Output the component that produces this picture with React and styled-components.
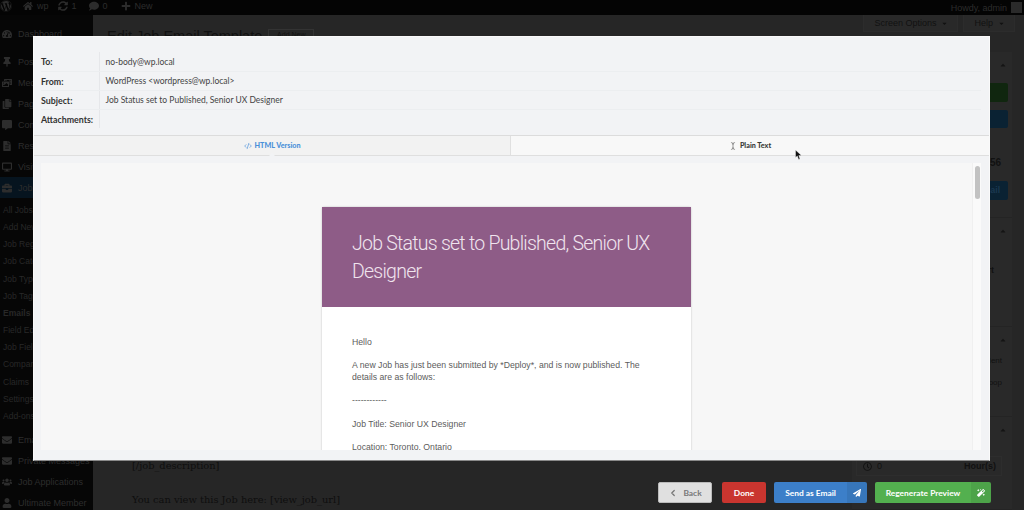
import React from "react"
import styled, { createGlobalStyle } from "styled-components"
import { CodeXml, TextCursor, ChevronLeft } from "lucide-react"
import {
  FaWordpress, FaHome, FaSyncAlt, FaComment, FaPlus, FaTachometerAlt, FaThumbtack, FaPhotoVideo,
  FaCopy, FaCommentAlt, FaFileAlt, FaDesktop, FaBriefcase, FaEnvelope, FaUsers, FaUser,
  FaPaperPlane, FaMagic, FaRegClock, FaCaretUp, FaCaretDown,
} from "react-icons/fa"

const Global = createGlobalStyle`
  html, body { margin: 0; padding: 0; background: #262626; }
  * { box-sizing: border-box; }
`

const Page = styled.div`
  position: relative;
  width: 1024px;
  height: 510px;
  overflow: hidden;
  display: flex;
  flex-direction: column;
  background: #262626;
  font-family: "Liberation Sans", Arial, sans-serif;
`

const AdminBar = styled.div`
  display: flex;
  align-items: center;
  flex: 0 0 15px;
  padding: 0 2px 3px 0;
  background: #040404;
  color: #2c2c2c;
  font-size: 9px;
  svg { width: 10px; height: 10px; }
`

const BarItem = styled.span`
  display: flex;
  align-items: center;
  gap: 4px;
  margin-left: ${p => p.$left || 0}px;
`

const Logo = styled(FaWordpress)`
  && { width: 12px; height: 12px; }
`

const Howdy = styled.span`
  display: flex;
  align-items: center;
  gap: 4px;
  margin-left: auto;
  margin-bottom: -3px;
`

const Avatar = styled.i`
  width: 11px;
  height: 11px;
  background: #2a2a2a;
`

const Body = styled.div`
  display: flex;
  flex: 1;
  min-height: 0;
`

const Sidebar = styled.nav`
  flex: 0 0 93px;
  padding-top: 8px;
  background: #060606;
  overflow: hidden;
`

const MenuItem = styled.div`
  display: flex;
  align-items: center;
  gap: 6px;
  height: 21px;
  padding-left: 2px;
  margin-bottom: ${p => p.$after || 0}px;
  color: #2d2d2d;
  font-size: 9px;
  white-space: nowrap;
  background: ${p => (p.$active ? "#06141f" : "transparent")};
  svg { width: 10px; height: 10px; flex: none; }
`

const SubMenu = styled.div`
  padding: 4px 0 4.5px;
`

const SubItem = styled.div`
  height: 17.17px;
  line-height: 17px;
  padding-left: 3px;
  font-size: 8.5px;
  font-weight: ${p => (p.$bold ? 700 : 400)};
  color: #282828;
  white-space: nowrap;
`

const Main = styled.main`
  flex: 1;
  min-width: 0;
  display: flex;
  flex-direction: column;
  padding-left: 14px;
`

const ScreenTools = styled.div`
  display: flex;
  justify-content: flex-end;
  gap: 5px;
  height: 15px;
  padding-right: 9px;
`

const ScreenTab = styled.div`
  display: flex;
  align-items: center;
  gap: 5px;
  height: 17px;
  padding: 0 9px 0 10px;
  background: #292929;
  border: 1px solid #2c2c2c;
  border-top: 0;
  color: #111;
  font-size: 9px;
  svg { width: 7px; height: 7px; }
`

const TitleRow = styled.div`
  display: flex;
  align-items: flex-start;
  gap: 6px;
  height: 22px;
  color: #111;
  font-size: 14.5px;
  line-height: 13px;
`

const AddNew = styled.span`
  width: 46px;
  height: 12px;
  line-height: 10px;
  margin-top: -1px;
  text-align: center;
  border: 1px solid #333;
  font-size: 7px;
`

const Columns = styled.div`
  display: flex;
  flex: 1;
  min-height: 0;
`

const Editor = styled.div`
  flex: 1;
  display: flex;
  flex-direction: column;
  justify-content: flex-end;
  padding-left: 25px;
  color: #0e0e0e;
  font-family: "DejaVu Serif", "Liberation Serif", serif;
  font-size: 9.85px;
`

const EditorLine = styled.div`
  height: 34px;
  line-height: 20px;
  &:last-child { height: 20px; }
`

const Side = styled.aside`
  flex: 0 0 178px;
  padding: 0 12px 0 6px;
`

const PostBox = styled.section`
  height: ${p => p.$height}px;
  background: #292929;
  border-bottom: 1px solid #242424;
  padding: 0 4px;
  color: #111;
  font-size: 9px;
`

const BoxHead = styled.div`
  display: flex;
  justify-content: flex-end;
  align-items: center;
  height: 26px;
  padding-right: 1px;
  color: #141414;
  svg { width: 8px; height: 8px; }
`

const MetaButton = styled.div`
  height: ${p => p.$h}px;
  margin-top: ${p => p.$top}px;
  padding-right: 8px;
  border-radius: 2px;
  background: ${p => p.$color};
  color: #1a3850;
  font-size: 8.5px;
  font-weight: 700;
  text-align: right;
  line-height: ${p => p.$h}px;
`

const MetaText = styled.div`
  display: flex;
  justify-content: flex-end;
  height: 12px;
  line-height: 12px;
  padding-right: ${p => p.$right || 7}px;
  margin-top: ${p => p.$top}px;
  font-weight: ${p => (p.$bold ? 700 : 400)};
  font-size: ${p => p.$size || 9}px;
`

const HourRow = styled.div`
  display: flex;
  align-items: center;
  gap: 5px;
  margin: 13px 6px 0 0;
  height: 20px;
  padding-left: 6px;
  border: 1px solid #2d2d2d;
  svg { width: 9px; height: 9px; }
  b { margin-left: auto; padding-right: 5px; font-size: 9px; }
`

const Modal = styled.div`
  position: absolute;
  left: 33px;
  top: 36px;
  width: 957px;
  height: 425px;
  display: flex;
  flex-direction: column;
  background: #f2f3f5;
  border: 1px solid #fafafa;
  border-bottom: 1px solid #8a8a8a;
  font-family: Lato, "Liberation Sans", sans-serif;
  overflow: hidden;
`

const Headers = styled.div`
  height: 98px;
  padding: 15px 8px 0 7px;
`

const HeaderRow = styled.div`
  display: flex;
  height: 19px;
  font-size: 8.5px;
  color: #444;
  & + & { border-top: 1.5px solid #eceef0; }
`

const HeaderLabel = styled.div`
  flex: 0 0 59px;
  display: flex;
  align-items: center;
  font-size: 8.8px;
  font-weight: 700;
  color: #333;
  border-right: 1px solid #e6e7ea;
`

const HeaderValue = styled.div`
  display: flex;
  align-items: center;
  padding-left: 5.5px;
`

const Tabs = styled.div`
  display: flex;
  height: 21px;
  border-top: 1px solid #dcdcdc;
  border-bottom: 1px solid #dfdfdf;
`

const Tab = styled.div`
  position: relative;
  flex: 0 0 ${p => p.$width}px;
  display: flex;
  align-items: center;
  justify-content: center;
  gap: 3px;
  font-size: 7.2px;
  font-weight: 900;
  color: ${p => (p.$active ? "#4a90d9" : "#3a3a3a")};
  background: ${p => (p.$active ? "#f2f2f2" : "#f8f8f8")};
  border-right: ${p => (p.$active ? "1px solid #e0e0e0" : "0")};
  svg { width: 8px; height: 8px; }
  ${p => p.$active && `
    &::after {
      content: "";
      position: absolute;
      left: 50%;
      bottom: -1px;
      margin-left: -3px;
      border: 3px solid transparent;
      border-bottom-color: #f2f3f5;
    }
  `}
`

const PreviewWrap = styled.div`
  flex: 1;
  min-height: 0;
  display: flex;
  margin: 7px 8px 10px 7px;
  background: #f7f7f7;
  overflow: hidden;
`

const Preview = styled.div`
  flex: 1;
  padding: 44px 0 0 281px;
  overflow: hidden;
`

const Scroll = styled.div`
  flex: 0 0 9px;
  padding: 3px 1.5px 0 1.5px;
  background: #fafafa;
  border-left: 1px solid #f0f0f0;
`

const Thumb = styled.div`
  width: 5px;
  height: 33px;
  border-radius: 3px;
  background: #c2c2c2;
`

const Card = styled.article`
  width: 369px;
  background: #fff;
  border-radius: 2px 2px 0 0;
  box-shadow: 0 0 2px rgba(0, 0, 0, 0.25);
`

const CardHead = styled.h1`
  margin: 0;
  height: 100px;
  padding: 23px 30px 0;
  background: #8e5c87;
  color: #f0e4ee;
  font-family: Roboto, "Liberation Sans", sans-serif;
  font-weight: 300;
  font-size: 19.5px;
  letter-spacing: -0.75px;
  line-height: 28px;
`

const CardBody = styled.div`
  padding: 29px 30px 0;
  color: #5c5c5c;
  font-family: "Liberation Sans", Arial, sans-serif;
  font-size: 8.7px;
  line-height: 12px;
`

const Para = styled.p`
  margin: 0 0 11.2px;
`

const Actions = styled.div`
  position: absolute;
  right: 33px;
  top: 482px;
  display: flex;
  gap: 8px;
  font-family: Lato, "Liberation Sans", sans-serif;
`

const Button = styled.div`
  display: flex;
  align-items: stretch;
  height: 21px;
  width: ${p => p.$width}px;
  margin-right: ${p => p.$after || 0}px;
  border-radius: 2px;
  overflow: hidden;
  color: ${p => p.$ink || "#fff"};
  background: ${p => p.$color};
  border: ${p => (p.$ink ? "1px solid #bbb" : "0")};
  font-size: 8.4px;
  font-weight: 700;
`

const ButtonLabel = styled.span`
  flex: 1;
  display: flex;
  align-items: center;
  justify-content: center;
  gap: 5px;
  svg { width: 10px; height: 10px; }
`

const ButtonIcon = styled.span`
  flex: 0 0 20px;
  display: flex;
  align-items: center;
  justify-content: center;
  background: rgba(0, 0, 0, 0.07);
  svg { width: 8px; height: 8px; }
`

const Cursor = styled.svg`
  position: absolute;
  left: 795px;
  top: 150px;
  width: 7px;
  height: 10px;
`

const menuTop = [
  { icon: <FaThumbtack />, label: "Posts" },
  { icon: <FaPhotoVideo />, label: "Media" },
  { icon: <FaCopy />, label: "Pages" },
  { icon: <FaCommentAlt />, label: "Comments" },
  { icon: <FaFileAlt />, label: "Resources" },
  { icon: <FaDesktop />, label: "Visitors" },
]

const subItems = ["All Jobs", "Add New", "Job Registrations", "Job Categories", "Job Types", "Job Tags", "Emails", "Field Editor", "Job Fields", "Companies", "Claims", "Settings", "Add-ons"]

const menuBottom = [
  { icon: <FaEnvelope />, label: "Emails" },
  { icon: <FaEnvelope />, label: "Private Messages" },
  { icon: <FaUsers />, label: "Job Applications" },
  { icon: <FaUser />, label: "Ultimate Member" },
]

const headers = [
  ["To:", "no-body@wp.local"],
  ["From:", "WordPress <wordpress@wp.local>"],
  ["Subject:", "Job Status set to Published, Senior UX Designer"],
  ["Attachments:", ""],
]

export default function App() {
  return (
    <Page>
      <Global />
      <AdminBar>
        <BarItem><Logo /></BarItem>
        <BarItem $left={11}><FaHome /> wp</BarItem>
        <BarItem $left={9}><FaSyncAlt /> 1</BarItem>
        <BarItem $left={12}><FaComment /> 0</BarItem>
        <BarItem $left={13}><FaPlus /> New</BarItem>
        <Howdy>Howdy, admin <Avatar /></Howdy>
      </AdminBar>
      <Body>
        <Sidebar>
          <MenuItem $after={7}><FaTachometerAlt /> Dashboard</MenuItem>
          {menuTop.map(m => <MenuItem key={m.label}>{m.icon} {m.label}</MenuItem>)}
          <MenuItem $active><FaBriefcase /> Job Manager</MenuItem>
          <SubMenu>
            {subItems.map(s => <SubItem key={s} $bold={s === "Emails"}>{s}</SubItem>)}
          </SubMenu>
          {menuBottom.map(m => <MenuItem key={m.label}>{m.icon} {m.label}</MenuItem>)}
        </Sidebar>
        <Main>
          <ScreenTools>
            <ScreenTab>Screen Options <FaCaretDown /></ScreenTab>
            <ScreenTab>Help <FaCaretDown /></ScreenTab>
          </ScreenTools>
          <TitleRow>Edit Job Email Template <AddNew>Add New</AddNew></TitleRow>
          <Columns>
            <Editor>
              <EditorLine>[/job_description]</EditorLine>
              <EditorLine>You can view this Job here: [view_job_url]</EditorLine>
            </Editor>
            <Side>
              <PostBox $height={166}>
                <BoxHead><FaCaretUp /></BoxHead>
                <MetaButton $h={19} $top={5} $color="#10260f" />
                <MetaButton $h={18} $top={8} $color="#0a2233" />
                <MetaText $top={29} $bold $size={10}>56</MetaText>
                <MetaButton $h={19} $top={12} $color="#0a2233">Email</MetaButton>
              </PostBox>
              <PostBox $height={109}>
                <BoxHead><FaCaretUp /></BoxHead>
                <MetaText $top={20} $right={14} $bold>Start</MetaText>
              </PostBox>
              <PostBox $height={90}>
                <BoxHead><FaCaretUp /></BoxHead>
                <MetaText $top={2} $right={6} $size={8}>Client</MetaText>
                <MetaText $top={10} $right={6} $size={8}>Loop</MetaText>
              </PostBox>
              <PostBox $height={93}>
                <BoxHead><FaCaretUp /></BoxHead>
                <HourRow><FaRegClock /> 0 <b>Hour(s)</b></HourRow>
              </PostBox>
            </Side>
          </Columns>
        </Main>
      </Body>

      <Modal>
        <Headers>
          {headers.map(([label, value]) => (
            <HeaderRow key={label}>
              <HeaderLabel>{label}</HeaderLabel>
              <HeaderValue>{value}</HeaderValue>
            </HeaderRow>
          ))}
        </Headers>
        <Tabs>
          <Tab $active $width={477}><CodeXml strokeWidth={2} /> HTML Version</Tab>
          <Tab $width={478}><TextCursor strokeWidth={1.5} /> Plain Text</Tab>
        </Tabs>
        <PreviewWrap>
          <Preview>
            <Card>
              <CardHead>Job Status set to Published, Senior UX Designer</CardHead>
              <CardBody>
                <Para>Hello</Para>
                <Para>A new Job has just been submitted by *Deploy*, and is now published. The details are as follows:</Para>
                <Para>------------</Para>
                <Para>Job Title: Senior UX Designer</Para>
                <Para>Location: Toronto, Ontario</Para>
              </CardBody>
            </Card>
          </Preview>
          <Scroll><Thumb /></Scroll>
        </PreviewWrap>
      </Modal>

      <Actions>
        <Button $width={54} $after={2} $color="#e0e0e0" $ink="#777"><ButtonLabel><ChevronLeft strokeWidth={3} /> Back</ButtonLabel></Button>
        <Button $width={44} $color="#c9352f"><ButtonLabel>Done</ButtonLabel></Button>
        <Button $width={93} $color="#3c7fc9"><ButtonLabel>Send as Email</ButtonLabel><ButtonIcon><FaPaperPlane /></ButtonIcon></Button>
        <Button $width={116} $color="#53b04f"><ButtonLabel>Regenerate Preview</ButtonLabel><ButtonIcon><FaMagic /></ButtonIcon></Button>
      </Actions>

      <Cursor viewBox="0 0 7 10"><path d="M0.5 0 L0.5 7.5 L2.3 6 L3.6 9.5 L5 9 L3.8 5.6 L6.5 5.5 Z" fill="#111" stroke="#fff" strokeWidth="0.4" /></Cursor>
    </Page>
  )
}
